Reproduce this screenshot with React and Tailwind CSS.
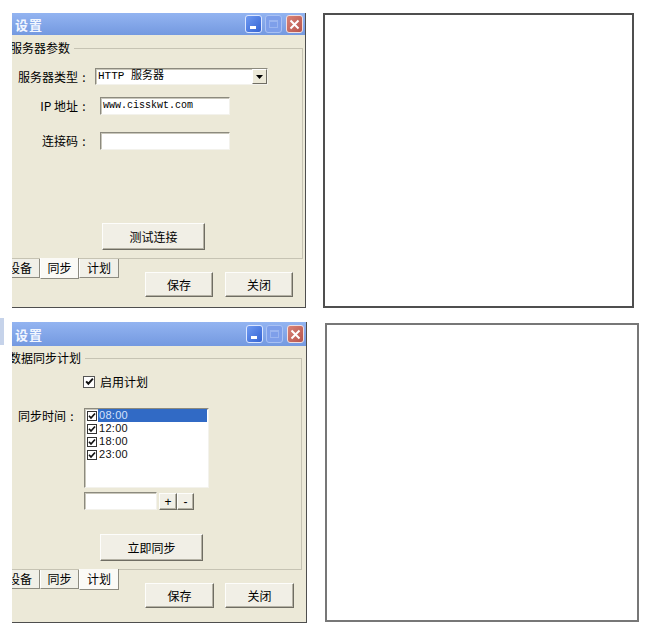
import React from "react";

const raised =
  "flex items-center justify-center bg-[#f1efe6] border border-t-[#fdfdfb] border-l-[#fdfdfb] border-r-[#6f6d63] border-b-[#6f6d63] shadow-[inset_-1px_-1px_0_#b5b2a5] text-[12px] text-black";
const sunken =
  "bg-white border border-t-[#8c8a7e] border-l-[#8c8a7e] border-r-[#f3f2ec] border-b-[#f3f2ec] shadow-[inset_1px_1px_0_#c9c7bb]";

function Check({ size = 10 }) {
  return (
    <svg width={size - 2} height={size - 2} viewBox="0 0 8 8">
      <path d="M1 3.8 L3 6 L7 1.5" fill="none" stroke="#111" strokeWidth="1.7" />
    </svg>
  );
}

function Colon() {
  return <span className="inline-block w-[12px] text-center">:</span>;
}

function TitleBar({ tall }) {
  return (
    <div
      className={
        (tall ? "h-[24px] " : "h-[22px] ") +
        "flex items-center bg-linear-to-b from-[#93b4f1] to-[#7499e0] pl-[3px] pr-[2px]"
      }
    >
      <span className="text-[13px] font-bold text-[#f2f6ff] leading-none tracking-[1px]">设置</span>
      <div className="ml-auto flex items-center">
        <div className="w-[17px] h-[18px] rounded-[3px] border border-[#dbe6ff] bg-linear-to-br from-[#6f9af2] to-[#3563d3] flex items-end pl-[4px] pb-[3px] mr-[3px]">
          <div className="w-[6px] h-[3px] bg-white" />
        </div>
        <div className="w-[17px] h-[18px] rounded-[3px] border border-[#a9c1f3] bg-[#7e9fea] flex items-center justify-center mr-[4px]">
          <div className="w-[9px] h-[8px] border border-[#9ab5f0] border-t-2" />
        </div>
        <div className="w-[17px] h-[18px] rounded-[3px] border border-[#f1dede] bg-linear-to-br from-[#d98377] to-[#b6544d] flex items-center justify-center">
          <svg width="11" height="11" viewBox="0 0 11 11">
            <path d="M1.5 1.5 L9.5 9.5 M9.5 1.5 L1.5 9.5" stroke="#fff" strokeWidth="2" />
          </svg>
        </div>
      </div>
    </div>
  );
}

function Tabs({ selected }) {
  const sel =
    "h-[21px] -mt-[1px] bg-[#fbfaf6] border-l border-l-[#ffffff] border-r border-r-[#8d8b80] border-b border-b-[#8d8b80] flex items-center justify-center text-[12px]";
  const un =
    "h-[19px] bg-[#f1f0e8] border-l border-l-[#ffffff] border-r border-r-[#8d8b80] border-b border-b-[#8d8b80] flex items-center justify-center text-[12px]";
  return (
    <div className="flex items-start">
      <div className={un + " w-[40px] -ml-[12px]"}>设备</div>
      <div className={(selected === 1 ? sel : un) + " w-[39px]"}>同步</div>
      <div className={(selected === 2 ? sel : un) + " w-[40px]"}>计划</div>
    </div>
  );
}

function WindowOne() {
  return (
    <div className="w-[294px] h-[295px] overflow-hidden bg-[#ece9d8] border-r border-b border-[#4e4e4e] flex flex-col">
      <TitleBar />
      <fieldset className="mt-[5px] mr-[2px] border border-l-0 border-[#c6c3b3] pb-[8px]">
        <legend className="-ml-[2px] pr-[4px] leading-[16px] text-[12px]">服务器参数</legend>
        <div className="mt-[12px] flex items-center h-[17px]">
          <div className="w-[78px] text-right text-[12px]">服务器类型<Colon /></div>
          <div className={sunken + " ml-[5px] w-[173px] h-[17px] flex items-center"}>
            <span className="pl-[2px] text-[11px] font-['Liberation_Mono','Noto_Sans_CJK_SC',monospace] leading-none">
              HTTP 服务器
            </span>
            <div className="ml-auto w-[15px] h-[15px] bg-[#ece9d8] border border-t-white border-l-white border-r-[#6f6d63] border-b-[#6f6d63] flex items-center justify-center">
              <svg width="7" height="4" viewBox="0 0 7 4">
                <path d="M0 0 L7 0 L3.5 4 Z" fill="#000" />
              </svg>
            </div>
          </div>
        </div>
        <div className="mt-[12px] flex items-center h-[18px]">
          <div className="w-[78px] text-right text-[12px]">IP 地址<Colon /></div>
          <div className={sunken + " ml-[10px] w-[130px] h-[18px] flex items-center"}>
            <span className="pl-[2px] text-[10px] font-['Liberation_Mono',monospace] leading-none">www.cisskwt.com</span>
          </div>
        </div>
        <div className="mt-[17px] flex items-center h-[18px]">
          <div className="w-[78px] text-right text-[12px]">连接码<Colon /></div>
          <div className={sunken + " ml-[10px] w-[130px] h-[18px]"} />
        </div>
        <div className={raised + " mt-[73px] ml-[90px] w-[103px] h-[27px]"}>测试连接</div>
      </fieldset>
      <div className="flex items-start">
        <Tabs selected={1} />
        <div className={raised + " mt-[13px] ml-[26px] w-[68px] h-[25px]"}>保存</div>
        <div className={raised + " mt-[13px] ml-[12px] w-[68px] h-[25px]"}>关闭</div>
      </div>
    </div>
  );
}

function ListRow({ t, sel }) {
  return (
    <div className="h-[13px] flex items-center pl-[2px]">
      <div className="w-[10px] h-[10px] bg-white border border-[#333] flex items-center justify-center">
        <Check />
      </div>
      <div
        className={
          (sel ? "bg-[#316ac5] text-[#d6e2fb] " : "text-[#111] ") +
          "ml-[1px] flex-1 h-[13px] leading-[13px] pl-[1px] text-[11px] font-['Liberation_Sans',sans-serif] tracking-[0.3px]"
        }
      >
        {t}
      </div>
    </div>
  );
}

function WindowTwo() {
  return (
    <div className="w-[295px] h-[301px] overflow-hidden bg-[#ece9d8] border-r border-b border-[#4e4e4e] flex flex-col">
      <TitleBar tall />
      <fieldset className="mt-[4px] mr-[4px] border border-l-0 border-[#c6c3b3] pb-[8px]">
        <legend className="-ml-[3px] pr-[4px] leading-[16px] text-[12px]">数据同步计划</legend>
        <div className="mt-[9px] flex items-center h-[13px]">
          <div className="ml-[71px] w-[12px] h-[12px] bg-white border border-[#555] flex items-center justify-center">
            <Check size={11} />
          </div>
          <span className="ml-[5px] text-[12px]">启用计划</span>
        </div>
        <div className="mt-[20px] flex items-start">
          <div className="w-[66px] text-right text-[12px] leading-[16px]">同步时间<Colon /></div>
          <div className={sunken + " ml-[6px] w-[125px] h-[80px] pr-[1px]"}>
            <ListRow t="08:00" sel />
            <ListRow t="12:00" />
            <ListRow t="18:00" />
            <ListRow t="23:00" />
          </div>
        </div>
        <div className="mt-[4px] flex items-start">
          <div className={sunken + " ml-[72px] w-[73px] h-[18px]"} />
          <div className={raised + " ml-[2px] mt-[1px] w-[18px] h-[17px] text-[11px] font-['Liberation_Sans',sans-serif]"}>+</div>
          <div className={raised + " mt-[1px] w-[17px] h-[17px] text-[11px] font-['Liberation_Sans',sans-serif]"}>-</div>
        </div>
        <div className={raised + " mt-[24px] ml-[88px] w-[103px] h-[27px]"}>立即同步</div>
      </fieldset>
      <div className="flex items-start">
        <Tabs selected={2} />
        <div className={raised + " mt-[13px] ml-[26px] w-[69px] h-[25px]"}>保存</div>
        <div className={raised + " mt-[13px] ml-[11px] w-[69px] h-[25px]"}>关闭</div>
      </div>
    </div>
  );
}

export default function App() {
  return (
    <div className="w-[650px] h-[629px] bg-white font-['Noto_Sans_CJK_SC',sans-serif] text-[12px] text-black overflow-hidden">
      <div className="flex items-start pt-[13px] pl-[12px]">
        <WindowOne />
        <div className="ml-[17px] w-[311px] h-[295px] border-2 border-[#4f4f4f] bg-white" />
      </div>
      <div className="flex items-start mt-[14px]">
        <div className="w-[4px] h-[27px] -mt-[4px] bg-[#c6d3ea]" />
        <div className="ml-[8px]">
          <WindowTwo />
        </div>
        <div className="ml-[18px] mt-[1px] w-[314px] h-[299px] border-2 border-[#777] bg-white" />
      </div>
    </div>
  );
}
